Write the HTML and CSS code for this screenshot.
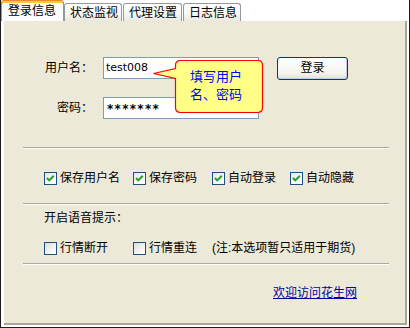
FILE: index.html
```html
<!DOCTYPE html>
<html>
<head>
<meta charset="utf-8">
<link rel="stylesheet" href="styles.css">
</head>
<body>
<div class="window">
  <div class="tabs">
    <div class="tab active">登录信息</div>
    <div class="tab t2">状态监视</div>
    <div class="tab t3">代理设置</div>
    <div class="tab t4">日志信息</div>
  </div>
  <div class="panel">
    <div class="login">
      <div class="row">
        <span class="lbl">用户名：</span>
        <div class="input">test008</div>
        <div class="btn">登录</div>
      </div>
      <div class="row row2">
        <span class="lbl">密码：</span>
        <div class="input pwd">*******</div>
      </div>
    </div>
    <div class="sep sep1"></div>
    <div class="checks checks1">
      <div class="item"><span class="cb on"><svg width="11" height="11" viewBox="0 0 11 11"><path d="M2 5 L4.3 7.4 L8.8 2.8" fill="none" stroke="#21a121" stroke-width="2"/></svg></span><span>保存用户名</span></div>
      <div class="item"><span class="cb on"><svg width="11" height="11" viewBox="0 0 11 11"><path d="M2 5 L4.3 7.4 L8.8 2.8" fill="none" stroke="#21a121" stroke-width="2"/></svg></span><span>保存密码</span></div>
      <div class="item"><span class="cb on"><svg width="11" height="11" viewBox="0 0 11 11"><path d="M2 5 L4.3 7.4 L8.8 2.8" fill="none" stroke="#21a121" stroke-width="2"/></svg></span><span>自动登录</span></div>
      <div class="item"><span class="cb on"><svg width="11" height="11" viewBox="0 0 11 11"><path d="M2 5 L4.3 7.4 L8.8 2.8" fill="none" stroke="#21a121" stroke-width="2"/></svg></span><span>自动隐藏</span></div>
    </div>
    <div class="sep sep2"></div>
    <div class="voice">开启语音提示：</div>
    <div class="checks checks2">
      <div class="item"><span class="cb"></span><span>行情断开</span></div>
      <div class="item"><span class="cb"></span><span>行情重连</span></div>
      <div class="item note">(注:本选项暂只适用于期货)</div>
    </div>
    <div class="sep sep3"></div>
    <div class="linkrow"><a class="link" href="#">欢迎访问花生网</a></div>
  </div>
  <div class="callout">
    <svg class="bubble" width="112" height="54" viewBox="0 0 112 54"><path d="M28.5,0.5 H105.5 Q110.5,0.5 110.5,5.5 V47.5 Q110.5,52.5 105.5,52.5 H28.5 Q23.5,52.5 23.5,47.5 V18.5 L1.5,13.5 L23.5,8.5 V5.5 Q23.5,0.5 28.5,0.5 Z" fill="#ffff88" stroke="#ff0000" stroke-width="1.2"/></svg>
    <div class="ctext">填写用户<br>名、密码</div>
  </div>
</div>
</body>
</html>
```
FILE: styles.css
```css
html, body {
  margin: 0;
  padding: 0;
  background: #ffffff;
}
body {
  font-family: "Liberation Sans", "Noto Sans CJK SC", sans-serif;
  font-size: 12px;
  line-height: 14px;
  color: #000;
}
.window {
  position: relative;
  width: 410px;
  height: 328px;
  box-sizing: border-box;
  border-left: 1px solid #1e1e1e;
  border-right: 1px solid #1e1e1e;
  border-bottom: 1px solid #1e1e1e;
  padding: 0 2px 2px 3px;
  background: #fff;
}
.tabs {
  display: flex;
  align-items: flex-end;
  height: 21px;
  margin-left: -3px;
}
.tab {
  box-sizing: border-box;
  height: 18px;
  width: 58px;
  border: 1px solid #919b9c;
  border-bottom: none;
  border-radius: 3px 3px 0 0;
  padding: 2px 0 0 5px;
  white-space: nowrap;
  background: linear-gradient(#ffffff, #f7f7f4 55%, #e9e8e1);
}
.tab.active {
  height: 21px;
  width: 63px;
  padding: 2px 0 0 6px;
  border-top: 1px solid #e68b2c;
  box-shadow: inset 0 2px 0 #ffc73c;
  background: #fcfcfe;
  padding-top: 3px;
}
.tab.t3 { margin-left: 1px; width: 59px; }
.tab.t4 { margin-left: 1px; }
.panel {
  box-sizing: border-box;
  height: 304px;
  background: #ece9d8;
  border-right: 2px solid #a9a699;
  border-bottom: 2px solid #a9a699;
}
.login {
  padding-top: 36px;
}
.row {
  display: flex;
  align-items: center;
  height: 22px;
}
.row2 {
  margin-top: 18px;
}
.lbl {
  box-sizing: border-box;
  width: 99px;
  padding-right: 10px;
  text-align: right;
  white-space: nowrap;
}
.input {
  box-sizing: border-box;
  width: 156px;
  height: 22px;
  border: 1px solid #7f9db9;
  background: #fff;
  padding: 3px 0 0 2px;
  font-family: "DejaVu Sans", sans-serif;
  font-size: 11px;
  line-height: 14px;
}
.input.pwd {
  padding: 4px 0 0 3px;
  font-size: 12px;
  letter-spacing: 1.3px;
  font-weight: bold;
}
.btn {
  box-sizing: border-box;
  width: 71px;
  height: 23px;
  margin-left: 18px;
  border: 1px solid #003c74;
  border-radius: 3px;
  background: linear-gradient(#ffffff, #f4f4f0 70%, #e3e0d4);
  box-shadow: inset -1px -1px 0 #c1ccdd;
  text-align: center;
  line-height: 20px;
}
.sep {
  width: 366px;
  margin-left: 19px;
  border-top: 1px solid #aca899;
  border-bottom: 1px solid #ffffff;
}
.sep1 { margin-top: 28px; }
.sep2 { margin-top: 18px; }
.sep3 { margin-top: 8px; }
.checks {
  display: grid;
  grid-template-columns: 89px 79px 78px auto;
  padding-left: 40px;
  height: 14px;
}
.checks1 { margin-top: 22px; }
.checks2 { margin-top: 16px; }
.item {
  display: flex;
  align-items: center;
  gap: 3px;
  white-space: nowrap;
}
.cb {
  box-sizing: border-box;
  width: 13px;
  height: 13px;
  border: 1px solid #1c5180;
  background: linear-gradient(135deg, #dcdcd7, #ffffff 90%);
  display: inline-flex;
  flex: none;
}
.cb.on {
  background: linear-gradient(135deg, #e4e4df, #ffffff 70%);
}
.voice {
  margin-top: 6px;
  padding-left: 40px;
}
.linkrow {
  margin-top: 21px;
  padding-left: 269px;
}
.link {
  color: #0000a8;
  text-decoration: underline;
}
.callout {
  position: absolute;
  left: 151px;
  top: 60px;
  width: 112px;
  height: 54px;
}
.bubble {
  display: block;
}
.ctext {
  position: absolute;
  left: 38px;
  top: 8px;
  font-size: 13px;
  line-height: 18px;
  color: #0000ff;
  white-space: nowrap;
}
```
